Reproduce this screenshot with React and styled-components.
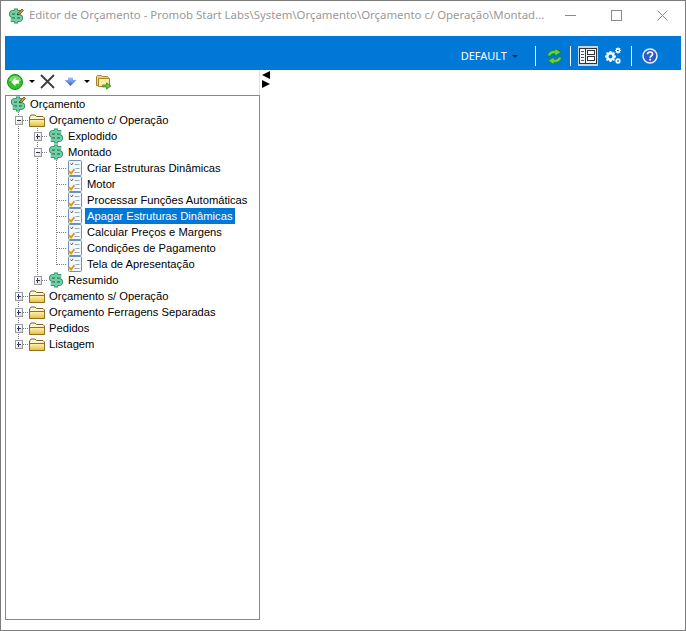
import React from 'react';
import styled, { createGlobalStyle, css } from 'styled-components';

const Global = createGlobalStyle`
  html, body { margin: 0; padding: 0; background: #fff; }
  * { box-sizing: border-box; }
`;

const Win = styled.div`
  width: 686px; height: 631px;
  display: flex; flex-direction: column;
  background: #fff;
  border: 1px solid #7c7c7c;
  font-family: "Noto Sans", "Open Sans", sans-serif;
  overflow: hidden;
`;
const TitleBar = styled.div`
  height: 35px; flex: none;
  display: flex; align-items: flex-start;
  padding: 7px 0 0 7px;
`;
const TitleText = styled.div`
  margin-left: 5px; flex: 1; min-width: 0;
  font-size: 11.4px; line-height: 14px; color: #999; white-space: nowrap;
`;
const CaptionBtn = styled.div`
  width: 46px; height: 14px; flex: none;
  display: flex; align-items: center; justify-content: center;
`;
const Body = styled.div`
  flex: 1; min-height: 0;
  display: flex; flex-direction: column;
  padding: 0 4px 10px;
`;
const Ribbon = styled.div`
  height: 34px; flex: none;
  background: #0078d7;
  display: flex; align-items: center; justify-content: flex-end;
  padding: 6px 23px 0 0;
  color: #fff;
`;
const DefaultLabel = styled.span`
  font-size: 11px; color: #fff; margin-bottom: 2px;
`;
const Caret = styled.span`
  display: inline-block; width: 0; height: 0;
  border-left: 3px solid transparent; border-right: 3px solid transparent;
  border-top: 3px solid ${p => p.$color || '#000'};
  margin-left: ${p => p.$ml || 5}px;
  flex: none;
`;
const RibbonSep = styled.span`
  width: 1px; height: 20px; background: #fff; flex: none;
  margin: 0 ${p => p.$r || 9}px 0 ${p => p.$l || 9}px;
`;
const RibbonBtn = styled.div`
  width: 20px; height: 20px; flex: none;
  display: flex; align-items: center; justify-content: center;
  background: ${p => (p.$active ? '#c9d6e2' : 'transparent')};
`;
const Main = styled.div`
  flex: 1; min-height: 0; display: flex;
`;
const LeftPane = styled.div`
  width: 255px; flex: none;
  display: flex; flex-direction: column;
`;
const Toolbar = styled.div`
  height: 25px; flex: none;
  display: flex; align-items: center;
  padding: 0 0 2px 2px;
  border-right: 1px solid #e2e2e2;
`;
const ToolIcon = styled.span`
  display: flex; flex: none;
  margin-left: ${p => p.$ml || 0}px;
`;
const Splitter = styled.div`
  display: flex; flex-direction: column; gap: 1px;
  padding: 1px 0 0 2px;
`;
const Tri = styled.span`
  display: block; width: 0; height: 0;
  border-top: 4px solid transparent; border-bottom: 4px solid transparent;
  ${p => (p.$dir === 'left'
    ? css`border-right: 8px solid #000;`
    : css`border-left: 8px solid #000;`)}
`;
const Tree = styled.div`
  flex: 1; min-height: 0;
  border: 1px solid #828790;
  padding-left: 4px;
`;
const Row = styled.div`
  height: 16px; display: flex; align-items: center;
`;
const dot = '#808080';
const vLine = `repeating-linear-gradient(to bottom, ${dot} 0 1px, transparent 1px 2px)`;
const hLine = `repeating-linear-gradient(to right, ${dot} 0 1px, transparent 1px 2px)`;
const Cell = styled.div`
  width: 19px; height: 16px; flex: none;
  display: flex; align-items: center;
  padding-left: 5px;
  background-repeat: no-repeat;
  ${p => {
    const imgs = [];
    const sizes = [];
    const pos = [];
    if (p.$v) {
      imgs.push(vLine);
      sizes.push(`1px ${p.$v === 'half' ? 9 : 16}px`);
      pos.push('8px 0');
    }
    if (p.$h) {
      imgs.push(hLine);
      sizes.push('10px 1px');
      pos.push('9px 8px');
    }
    return imgs.length ? css`
      background-image: ${imgs.join(',')};
      background-size: ${sizes.join(',')};
      background-position: ${pos.join(',')};
    ` : '';
  }}
`;
const Expander = styled.span`
  width: 8px; height: 9px; flex: none;
  border: 1px solid #9a9a9a;
  margin-top: 1px;
  background: linear-gradient(135deg, #fff 30%, #d8d8d8 100%);
  display: flex; align-items: center; justify-content: center;
  position: relative;
  &::before { content: ''; width: 4px; height: 1px; background: #2a3a5a; display: block; }
  ${p => p.$open ? '' : css`
    &::after { content: ''; position: absolute; left: 2px; top: 1px; width: 1px; height: 5px; background: #2a3a5a; }
  `}
`;
const Label = styled.span`
  font-family: "Liberation Sans", Arial, sans-serif;
  font-size: 11.2px; line-height: 16px; height: 16px;
  color: ${p => (p.$sel ? '#fff' : '#000')};
  background: ${p => (p.$sel ? '#0078d7' : 'transparent')};
  margin-left: 2px; padding: 0 2px;
  white-space: nowrap;
`;
const Ic = styled.svg`
  display: block; flex: none;
`;

const SP = 'M13.200 3.900H5.500Q2.800 3.900 2.800 6 2.800 8 5.500 8H10.500Q13.200 8 13.200 10 13.200 12.100 10.500 12.100H2.800';
const DollarIcon = ({ pencil }) => (
  <Ic width="16" height="16" viewBox="0 0 16 16">
    <path d={SP} fill="none" stroke="#2e8a68" strokeWidth="3.800" />
    <path d="M8 .5V15.500" stroke="#2e8a68" strokeWidth="4" />
    <path d={SP} fill="none" stroke="#72cfa2" strokeWidth="2.200" />
    <path d="M8 1.300V14.700" stroke="#72cfa2" strokeWidth="2.400" />
    {pencil && <>
      <path d="M9.500 5.500 14 1l1.500 1.500L11 7Z" fill="#e08a2a" stroke="#6b3d12" strokeWidth=".7" />
      <path d="M9.500 5.500 9 7.300 11 7Z" fill="#333" />
    </>}
  </Ic>
);
const FolderIcon = () => (
  <Ic width="16" height="16" viewBox="0 0 16 16">
    <defs>
      <linearGradient id="fg" x1="0" y1="0" x2="0" y2="1">
        <stop offset="0" stopColor="#fff4b8" />
        <stop offset="1" stopColor="#ecbc38" />
      </linearGradient>
    </defs>
    <path d="M.5 14V5L2 3h4l1.500 1.500h6.500l1.500 1.500v8Z" fill="#fdf5d0" stroke="#7f6520" />
    <path d="M.5 14.500V7.500h15v7Z" fill="url(#fg)" stroke="#8f7022" />
  </Ic>
);
const DocIcon = () => (
  <Ic width="16" height="16" viewBox="0 0 16 16">
    <rect x="1.500" y=".5" width="13" height="15" rx="1" fill="#e6eff8" stroke="#6f93b8" />
    <rect x="2.500" y="1.500" width="11" height="13" fill="#f7fafd" />
    <path d="M3.500 3.500 4.500 5 6 2.800" fill="none" stroke="#555" />
    <path d="M7.500 4.500H12.500M8.500 8.500H12.500M7.500 12.500H12.500" stroke="#8fa9c4" />
    <path d="M1.500 11 4 13.500 7.500 9" fill="none" stroke="#e8960f" strokeWidth="2" />
  </Ic>
);
const BackIcon = () => (
  <Ic width="16" height="16" viewBox="0 0 16 16">
    <circle cx="8" cy="8" r="7.500" fill="#2fc42a" stroke="#1c8a19" />
    <path d="M2 7a6 5 0 0 1 12 0Z" fill="#9ce88a" opacity=".7" />
    <path d="M8.500 3.800 4.200 8l4.300 4.200V9.700h3.600V6.300H8.500Z" fill="#fff" />
  </Ic>
);
const CloseX = () => (
  <Ic width="15" height="15" viewBox="0 0 15 15">
    <path d="M1 1 14 14M14 1 1 14" stroke="#3c3c3c" strokeWidth="1.800" />
  </Ic>
);
const BlueDown = () => (
  <Ic width="13" height="10" viewBox="0 0 13 10">
    <defs>
      <linearGradient id="bd" x1="0" y1="0" x2="0" y2="1">
        <stop offset="0" stopColor="#a4c8f8" />
        <stop offset="1" stopColor="#2a60d8" />
      </linearGradient>
    </defs>
    <path d="M4 .5H9V3H12.500L6.500 9 .5 3H4Z" fill="url(#bd)" />
  </Ic>
);
const GoFolder = () => (
  <Ic width="16" height="16" viewBox="0 0 16 16">
    <path d="M.5 11.500V2.500l1-1h4l1 1h5l1 1v8Z" fill="#f2d16f" stroke="#a5852b" />
    <path d="M2.500 12.500v-8h11v8Z" fill="#ffeda6" stroke="#a5852b" />
    <path d="M6.500 11h4V8.800l4.500 3.200-4.500 3.200V13h-4Z" fill="#6cc23a" stroke="#35801a" strokeWidth=".7" />
  </Ic>
);
const Refresh = () => (
  <Ic width="17" height="17" viewBox="0 0 17 17">
    <path d="M1.500 8C2 4 5 2.200 9 2.500V.5l6 3.800-6 3.700V5.800C7 5.300 5 6 4.500 8Z" fill="#66d23a" stroke="#1d7a14" strokeWidth=".7" />
    <path d="M15.500 9C15 13 12 14.800 8 14.500v2L2 12.700 8 9v2.200c2 .5 4-.2 4.500-2.200Z" fill="#66d23a" stroke="#1d7a14" strokeWidth=".7" />
  </Ic>
);
const PanelIcon = () => (
  <Ic width="18" height="18" viewBox="0 0 18 18">
    <rect x=".5" y="1.500" width="17" height="15" fill="#f5f5f5" stroke="#333" />
    <path d="M6.500 1.500v15" stroke="#333" />
    <path d="M2 4.500h3M2 7.500h3M2 10.500h3M2 13.500h3" stroke="#555" />
    <rect x="8.500" y="3.500" width="7" height="4" fill="#fff" stroke="#333" />
    <rect x="8.500" y="9.500" width="7" height="4" fill="#fff" stroke="#333" />
  </Ic>
);
const gearPath = (cx, cy, r, t) => {
  const spokes = [];
  for (let i = 0; i < 8; i++) {
    const a = (i * Math.PI) / 4;
    spokes.push(`M${cx + Math.cos(a) * (r - 1)} ${cy + Math.sin(a) * (r - 1)}L${cx + Math.cos(a) * (r + t)} ${cy + Math.sin(a) * (r + t)}`);
  }
  return spokes.join('');
};
const Gears = () => (
  <Ic width="18" height="18" viewBox="0 0 18 18">
    <path d={gearPath(6.500, 9.500, 4, 1.500)} stroke="#fff" strokeWidth="2" />
    <circle cx="6.500" cy="9.500" r="3.200" fill="none" stroke="#fff" strokeWidth="2.400" />
    <path d={gearPath(14, 3.500, 2, 1)} stroke="#fff" strokeWidth="1.200" />
    <circle cx="14" cy="3.500" r="1.600" fill="none" stroke="#fff" strokeWidth="1.100" />
    <path d={gearPath(14, 14, 2, 1)} stroke="#fff" strokeWidth="1.200" />
    <circle cx="14" cy="14" r="1.600" fill="none" stroke="#fff" strokeWidth="1.100" />
  </Ic>
);
const Help = () => (
  <Ic width="16" height="16" viewBox="0 0 16 16">
    <circle cx="8" cy="8" r="7" fill="#2d5cc8" stroke="#e8eefc" strokeWidth="1.500" />
    <path d="M5.500 6.200C5.600 4.700 6.700 4 8 4c1.500 0 2.600.8 2.600 2.100 0 1.900-2.500 1.800-2.500 3.600" fill="none" stroke="#fff" strokeWidth="1.700" />
    <rect x="7.200" y="10.800" width="1.800" height="1.800" fill="#fff" />
  </Ic>
);
const AppIcon = () => <DollarIcon pencil />;

const leaf = ['Criar Estruturas Dinâmicas', 'Motor', 'Processar Funções Automáticas', 'Apagar Estruturas Dinâmicas', 'Calcular Preços e Margens', 'Condições de Pagamento', 'Tela de Apresentação'];

const Guide = ({ v, h }) => <Cell $v={v} $h={h} />;

const TreeRow = ({ cells, exp, icon, label, sel }) => (
  <Row>
    {cells}
    {exp}
    {icon}
    <Label $sel={sel}>{label}</Label>
  </Row>
);

const ExpCell = ({ open, v }) => (
  <Cell $v={v} $h><Expander $open={open} /></Cell>
);

const App = () => (
  <Win>
    <Global />
    <TitleBar>
      <AppIcon />
      <TitleText>Editor de Orçamento - Promob Start Labs\System\Orçamento\Orçamento c/ Operação\Montad...</TitleText>
      <CaptionBtn>
        <Ic width="11" height="11" viewBox="0 0 11 11"><path d="M0 5.500h11" stroke="#8a8a8a" /></Ic>
      </CaptionBtn>
      <CaptionBtn>
        <Ic width="11" height="11" viewBox="0 0 11 11"><rect x=".5" y=".5" width="10" height="10" fill="none" stroke="#8a8a8a" /></Ic>
      </CaptionBtn>
      <CaptionBtn>
        <Ic width="11" height="11" viewBox="0 0 11 11"><path d="M.5 .5l10 10M10.500 .5l-10 10" stroke="#8a8a8a" /></Ic>
      </CaptionBtn>
    </TitleBar>
    <Body>
      <Ribbon>
        <DefaultLabel>DEFAULT</DefaultLabel>
        <Caret $color="#0a2540" />
        <RibbonSep $l={17} $r={8} />
        <RibbonBtn><Refresh /></RibbonBtn>
        <RibbonSep $l={6} $r={7} />
        <RibbonBtn $active><PanelIcon /></RibbonBtn>
        <ToolIcon $ml={6}><Gears /></ToolIcon>
        <RibbonSep $l={9} $r={10} />
        <ToolIcon><Help /></ToolIcon>
      </Ribbon>
      <Main>
        <LeftPane>
          <Toolbar>
            <BackIcon />
            <Caret $ml={6} />
            <ToolIcon $ml={5}><CloseX /></ToolIcon>
            <ToolIcon $ml={9}><BlueDown /></ToolIcon>
            <Caret $ml={7} />
            <ToolIcon $ml={6}><GoFolder /></ToolIcon>
          </Toolbar>
          <Tree>
            <TreeRow icon={<AppIcon />} label="Orçamento" />
            <TreeRow exp={<ExpCell open v="full" />} icon={<FolderIcon />} label="Orçamento c/ Operação" />
            <TreeRow cells={<Guide v="full" />} exp={<ExpCell v="full" />} icon={<DollarIcon />} label="Explodido" />
            <TreeRow cells={<Guide v="full" />} exp={<ExpCell open v="full" />} icon={<DollarIcon />} label="Montado" />
            {leaf.map((l, i) => (
              <TreeRow
                key={l}
                cells={<><Guide v="full" /><Guide v="full" /><Guide v={i === leaf.length - 1 ? 'half' : 'full'} h /></>}
                icon={<DocIcon />}
                label={l}
                sel={i === 3}
              />
            ))}
            <TreeRow cells={<Guide v="full" />} exp={<ExpCell v="half" />} icon={<DollarIcon />} label="Resumido" />
            <TreeRow exp={<ExpCell v="full" />} icon={<FolderIcon />} label="Orçamento s/ Operação" />
            <TreeRow exp={<ExpCell v="full" />} icon={<FolderIcon />} label="Orçamento Ferragens Separadas" />
            <TreeRow exp={<ExpCell v="full" />} icon={<FolderIcon />} label="Pedidos" />
            <TreeRow exp={<ExpCell v="half" />} icon={<FolderIcon />} label="Listagem" />
          </Tree>
        </LeftPane>
        <Splitter>
          <Tri $dir="left" />
          <Tri $dir="right" />
        </Splitter>
      </Main>
    </Body>
  </Win>
);

export default App;
